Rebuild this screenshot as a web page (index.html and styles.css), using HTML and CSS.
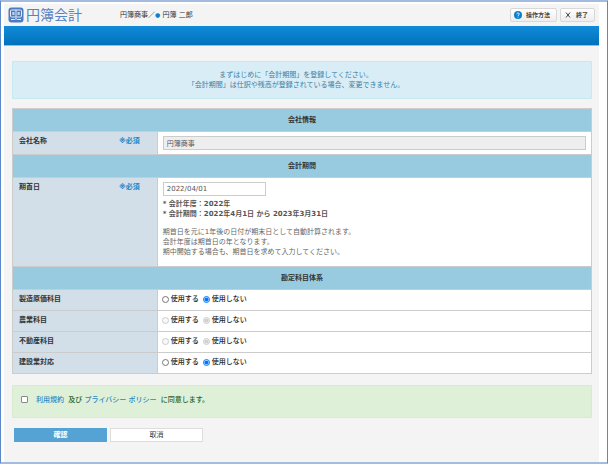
FILE: index.html
```html
<!DOCTYPE html>
<html lang="ja">
<head>
<meta charset="utf-8">
<meta name="viewport" content="width=device-width, initial-scale=1">
<title>円簿会計</title>
<link rel="stylesheet" href="styles.css">
</head>
<body>
<div class="page">
  <header class="header">
    <h1 class="brand">
      <svg class="brand-icon" viewBox="0 0 16 16" aria-hidden="true">
        <rect x="0.500" y="0.500" width="15" height="15" rx="3" fill="#4d7bc1"/>
        <rect x="2.500" y="3" width="11" height="7" rx="1" fill="none" stroke="#e4ecf8"/>
        <path d="M8 3v7" stroke="#e4ecf8" fill="none"/>
        <path d="M4.300 5h2.200v3H4.300zM9.500 5h2.200v3H9.500z" fill="#c3d5ee"/>
        <path d="M3 12.500h3.500l1.500-1 1.500 1H13" stroke="#e4ecf8" fill="none"/>
      </svg>
      <span>円簿会計</span>
    </h1>
    <p class="account">円簿商事／<span class="dot">●</span> 円簿 二郎</p>
    <div class="tools">
      <button class="tool" type="button">
        <svg class="tool-icon" viewBox="0 0 8 8" aria-hidden="true">
          <circle cx="4" cy="4" r="4" fill="#0a7fcb"/>
          <path d="M2.800 3.200c0-1.700 2.500-1.600 2.500-.1C5.300 4 4 3.900 4 5M4 5.700v.9" stroke="#fff" stroke-width=".9" fill="none"/>
        </svg>
        操作方法
      </button>
      <button class="tool" type="button">
        <svg class="tool-icon" viewBox="0 0 8 8" aria-hidden="true">
          <path d="M2 1.500l4 5M6 1.500L2 6.500" stroke="#444" stroke-width="1" fill="none"/>
        </svg>
        終了
      </button>
    </div>
  </header>
  <div class="bar"></div>
  <main class="main">
    <p class="notice">まずはじめに「会計期間」を登録してください。<br>「会計期間」は仕訳や残高が登録されている場合、変更できません。</p>
    <form>
      <table class="settings">
        <tbody>
          <tr><th class="section" colspan="2">会社情報</th></tr>
          <tr>
            <th class="name"><label class="caption" for="company">会社名称<span class="required">※必須</span></label></th>
            <td><input class="field wide" id="company" type="text" value="円簿商事" readonly></td>
          </tr>
          <tr><th class="section" colspan="2">会計期間</th></tr>
          <tr>
            <th class="name"><label class="caption" for="start">期首日<span class="required">※必須</span></label></th>
            <td>
              <input class="field date" id="start" type="text" value="2022/04/01">
              <p class="summary">* 会計年度：2022年<br>* 会計期間：2022年4月1日 から 2023年3月31日</p>
              <p class="help">期首日を元に1年後の日付が期末日として自動計算されます。<br>会計年度は期首日の年となります。<br>期中開始する場合も、期首日を求めて入力してください。</p>
            </td>
          </tr>
          <tr><th class="section" colspan="2">勘定科目体系</th></tr>
          <tr>
            <th class="name">製造原価科目</th>
            <td><div class="choices"><label><input type="radio" name="cost"> 使用する</label><label><input type="radio" name="cost" checked> 使用しない</label></div></td>
          </tr>
          <tr>
            <th class="name">農業科目</th>
            <td><div class="choices"><label><input type="radio" name="farm" disabled> 使用する</label><label><input type="radio" name="farm" checked disabled> 使用しない</label></div></td>
          </tr>
          <tr>
            <th class="name">不動産科目</th>
            <td><div class="choices"><label><input type="radio" name="estate" disabled> 使用する</label><label><input type="radio" name="estate" checked disabled> 使用しない</label></div></td>
          </tr>
          <tr>
            <th class="name">建設業対応</th>
            <td><div class="choices"><label><input type="radio" name="build"> 使用する</label><label><input type="radio" name="build" checked> 使用しない</label></div></td>
          </tr>
        </tbody>
      </table>
      <div class="consent">
        <input class="check" id="agree" type="checkbox">
        <label for="agree"><a href="#terms">利用規約</a> 及び <a href="#privacy">プライバシー ポリシー</a> に同意します。</label>
      </div>
      <div class="actions">
        <button class="button primary" type="submit">確認</button>
        <button class="button" type="button">取消</button>
      </div>
    </form>
  </main>
</div>
</body>
</html>
```
FILE: styles.css
```css
* {
  box-sizing: border-box;
}

body {
  margin: 0;
  min-height: 100vh;
  display: flex;
  padding: 2px 8px 0 3px;
  background: #fff;
  border: 1px solid #5b87cb;
  border-top: 2px solid #a3bbdf;
  border-bottom: 2px solid #a3bbdf;
  font-family: "DejaVu Sans", "Noto Sans CJK JP", sans-serif;
  font-size: 7px;
  line-height: 10px;
  color: #333;
}

p,
h1 {
  margin: 0;
}

button,
input {
  font: inherit;
  color: inherit;
}

a {
  color: #2a86c4;
  text-decoration: none;
}

.page {
  flex: 1;
  background: #f4f4f4;
}

.header {
  display: flex;
  align-items: center;
  height: 22px;
  padding: 0 4px;
}

.brand {
  display: flex;
  align-items: center;
  gap: 2px;
  width: 112px;
  font-size: 14px;
  line-height: 20px;
  font-weight: 400;
  color: #5582c4;
}

.brand-icon {
  width: 16px;
  height: 16px;
}

.account {
  flex: 1;
}

.dot {
  color: #0a7fcb;
  font-size: 6px;
}

.tools {
  display: flex;
  gap: 3px;
}

.tool {
  display: flex;
  align-items: center;
  gap: 4px;
  height: 14px;
  padding: 0 6px 0 3px;
  border: 1px solid #d8d8d8;
  border-radius: 2px;
  background: linear-gradient(#fff, #ededed);
  font-size: 6px;
  font-weight: 700;
  color: #444;
}

.tool-icon {
  width: 8px;
  height: 8px;
}

.bar {
  height: 20px;
  background: linear-gradient(#118bd8, #0072bc);
  border-bottom: 1px solid #8fc0df;
}

.main {
  padding: 15px 7px 0 8px;
}

.notice {
  padding: 8px 12px 8px 0;
  border: 1px solid #c5e9f1;
  border-radius: 1px;
  background: #d9edf7;
  color: #3d7f9f;
  text-align: center;
}

.settings {
  width: 100%;
  margin-top: 9px;
  border-collapse: collapse;
  background: #fff;
  border: 1px solid #ccc;
}

.settings th,
.settings td {
  border: 1px solid #ccc;
  padding: 5px;
  text-align: left;
  vertical-align: top;
}

.settings .section {
  padding: 6px;
  background: #99cbe0;
  text-align: center;
}

.settings .name {
  width: 25%;
  padding: 4px 17px 6px 6px;
  background: #d2dfe9;
}

.settings td {
  padding: 4px 5px;
}

.caption {
  display: flex;
  justify-content: space-between;
}

.required {
  color: #1c84c6;
}

.field {
  display: block;
  height: 14px;
  padding: 0 3px;
  border: 1px solid #ccc;
  border-radius: 0;
  background: #fff;
  color: #555;
}

.field.wide {
  width: 100%;
  background: #eee;
}

.field.date {
  width: 103px;
}

.summary {
  margin-top: 3px;
  font-weight: 700;
  color: #555;
}

.help {
  margin: 8px 0 5px;
  color: #666;
}

.choices {
  display: flex;
  gap: 4px;
  margin-left: -1px;
  font-weight: 500;
  color: #222;
}

.choices label {
  display: flex;
  align-items: center;
  gap: 2px;
}

.choices input {
  width: 7px;
  height: 7px;
  margin: 0;
}

.consent {
  display: flex;
  align-items: center;
  gap: 8px;
  height: 33px;
  margin-top: 11px;
  padding: 0 8px 4px;
  border: 1px solid #d8ebcc;
  background: #dff0d8;
  color: #2c662d;
  font-weight: 500;
}

.consent a {
  margin-right: 2px;
}

.check {
  appearance: none;
  width: 7px;
  height: 7px;
  margin: 0;
  border: 1px solid #888;
  border-radius: 1px;
  background: #fff;
}

.check:checked {
  background: #1c84c6;
}

.actions {
  display: flex;
  gap: 3px;
  padding: 10px 2px;
}

.button {
  width: 93px;
  height: 14px;
  padding: 0;
  border: 1px solid #ddd;
  background: #fff;
}

.button.primary {
  border-color: #55a3d5;
  background: #55a3d5;
  color: #fff;
  font-weight: 700;
}
```
